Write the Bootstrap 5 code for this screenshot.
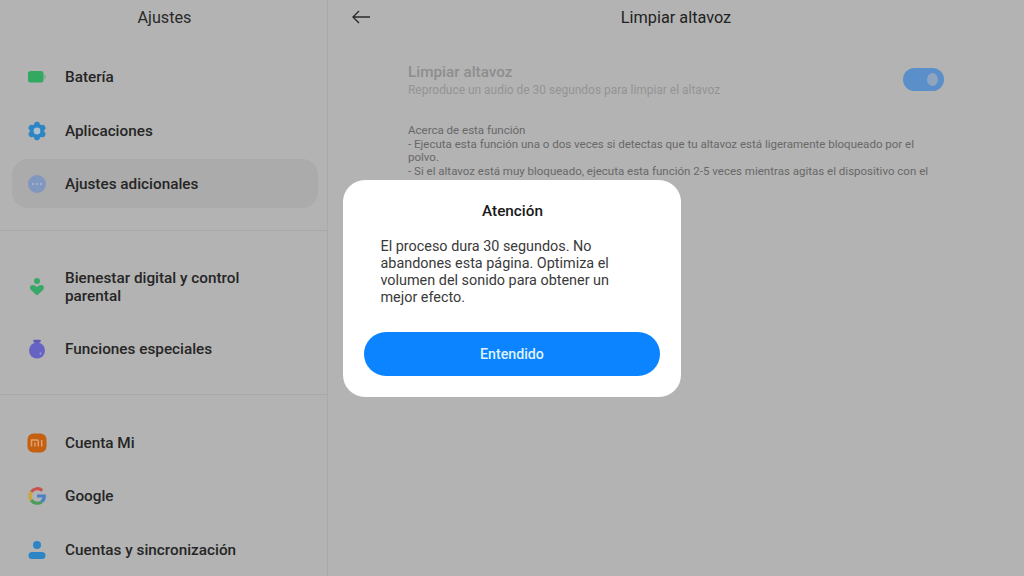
<!DOCTYPE html>
<html lang="es">
<head>
<meta charset="UTF-8">
<title>Limpiar altavoz</title>
<link href="https://cdn.jsdelivr.net/npm/bootstrap@5.3.3/dist/css/bootstrap.min.css" rel="stylesheet">
<style>
 html,body{height:100%}
 body{background:#b3b3b3;font-family:Roboto,"Noto Sans",sans-serif;color:#262626;overflow:hidden}
 .side{width:328px;height:576px;border-right:1px solid #a9a9a9;overflow:hidden}
 .side-title{height:35px;padding:8px 0 0 2px;font-size:16.2px;line-height:20px;color:#2a2a2a}
 .side-group{padding:15.25px 0 19.25px}
 .side-group+.side-group{padding:20.75px 0 18px;border-top:1px solid #a8a8a8}
 .side-group+.side-group+.side-group{padding-top:21px}
 .side-row{min-height:53.5px;padding-left:27px;gap:18px;font-size:15.3px;font-weight:500;line-height:18px;position:relative}
 .side-row.two-line{min-height:70.5px;padding-right:60px}
 .side-row.picked::before{content:"";position:absolute;left:12px;right:9px;top:1.25px;bottom:3.25px;border-radius:16px;background:#ababab}
 .side-row>*{position:relative}
 .side-row svg{width:20px;height:20px;flex:none}
 .main-head{height:35px;padding-top:8px;font-size:16.3px;line-height:20px;position:relative;color:#222}
 .back{position:absolute;left:23px;top:7px;width:20px;height:20px}
 .main-body{padding:27px 80px 0}
 .opt-title{font-size:15.3px;font-weight:500;line-height:20px;color:#8e8e8e}
 .opt-sub{font-size:11.95px;line-height:16px;color:#939393}
 .switch-pill{width:41px;height:23px;border-radius:12px;background:#5b8fc9;margin-top:6px;padding:5px 6px 5px 24px}
 .switch-pill span{display:block;width:11px;height:13px;border-radius:50%;background:#8ea4bf}
 .about{margin:26px 12px 0 0;font-size:11.53px;line-height:13.7px;color:#686868}
 .dialog{position:absolute;left:343px;top:180px;width:338px;height:217px;border-radius:22px;background:#fff;padding:21px}
 .dialog-title{font-size:15.3px;font-weight:500;line-height:20px;color:#1a1a1a;padding-left:1px}
 .dialog-text{margin:17px 30px 0 16.5px;font-size:14.4px;line-height:17px;color:#3a3a3a;height:68px}
 .dialog-btn{margin-top:26px;height:44px;border-radius:22px;background:#0d84ff;border:0;padding:8px 0 6px;color:#dff3ff;font-size:14.2px;font-weight:500}
</style>
</head>
<body>
<div class="d-flex">

  <!-- settings list -->
  <div class="side flex-shrink-0">
    <div class="side-title text-center">Ajustes</div>
    <div class="side-group">
      <div class="side-row d-flex align-items-center">
        <svg viewBox="0 0 20 20"><rect x="1" y="4" width="15.500" height="11.500" rx="2.500" fill="#33a860"/><rect x="17" y="7.500" width="1.700" height="4.500" rx=".8" fill="#7fae91"/></svg>
        <span>Batería</span>
      </div>
      <div class="side-row d-flex align-items-center">
        <svg viewBox="0 0 20 20">
          <g fill="#2c85c4">
            <circle cx="10" cy="10" r="7.300"/>
            <rect x="7.300" y="0.800" width="5.400" height="18.400" rx="2"/>
            <rect x="7.300" y="0.800" width="5.400" height="18.400" rx="2" transform="rotate(60 10 10)"/>
            <rect x="7.300" y="0.800" width="5.400" height="18.400" rx="2" transform="rotate(120 10 10)"/>
          </g>
          <circle cx="10" cy="10" r="3.400" fill="#aebfcc"/>
        </svg>
        <span>Aplicaciones</span>
      </div>
      <div class="side-row picked d-flex align-items-center">
        <svg viewBox="0 0 20 20"><circle cx="10" cy="10" r="9" fill="#8098c0"/><circle cx="6" cy="10" r="1" fill="#aebbd2"/><circle cx="10" cy="10" r="1" fill="#aebbd2"/><circle cx="14" cy="10" r="1" fill="#aebbd2"/></svg>
        <span>Ajustes adicionales</span>
      </div>
    </div>
    <div class="side-group">
      <div class="side-row two-line d-flex align-items-center">
        <svg viewBox="0 0 20 20"><circle cx="10" cy="4" r="3" fill="#37a868"/><path fill="#37a868" d="M10 18.500 4 13c-1.900-1.800-.9-5 1.700-5 1.700 0 2.900.9 4.300 1.900C11.400 8.900 12.600 8 14.300 8c2.600 0 3.600 3.200 1.700 5z"/></svg>
        <span>Bienestar digital y control parental</span>
      </div>
      <div class="side-row d-flex align-items-center">
        <svg viewBox="0 0 20 20"><rect x="6.300" y="0.700" width="7.400" height="2.600" rx=".8" fill="#5f5cb8"/><rect x="7.700" y="3" width="4.600" height="3" fill="#5f5cb8"/><circle cx="10" cy="11.500" r="8" fill="#6663c4"/><circle cx="13.500" cy="14.500" r=".9" fill="#a5a4dc"/></svg>
        <span>Funciones especiales</span>
      </div>
    </div>
    <div class="side-group">
      <div class="side-row d-flex align-items-center">
        <svg viewBox="0 0 20 20"><rect x="0.500" y="0.500" width="19" height="19" rx="6" fill="#c4600f"/><path fill="none" stroke="#e0a272" stroke-width="1.500" d="M4.500 13.500V7h5.500c.9 0 1.300.5 1.300 1.300v5.200M7.900 9.500v4M14.700 7v6.500"/></svg>
        <span>Cuenta Mi</span>
      </div>
      <div class="side-row d-flex align-items-center">
        <svg viewBox="0 0 20 20" fill="none" stroke-width="3.200"><path stroke="#c9524a" d="M15.200 4.600A7.300 7.300 0 0 0 4.300 5.800"/><path stroke="#c9a53c" d="M4.300 5.800a7.300 7.300 0 0 0 0 8.400"/><path stroke="#4c9b5c" d="M4.300 14.200a7.300 7.300 0 0 0 10.400 1.500"/><path stroke="#4a80c8" d="M14.700 15.700A7 7 0 0 0 17.300 10H10"/></svg>
        <span>Google</span>
      </div>
      <div class="side-row d-flex align-items-center">
        <svg viewBox="0 0 20 20"><circle cx="10" cy="5" r="4" fill="#2c85c4"/><rect x="1.500" y="12" width="17" height="7" rx="3.500" fill="#2c85c4"/></svg>
        <span>Cuentas y sincronización</span>
      </div>
    </div>
  </div>

  <!-- speaker cleaner page -->
  <div class="flex-grow-1">
    <div class="main-head text-center">
      <svg class="back" viewBox="0 0 20 20" fill="none" stroke="#2a2a2a" stroke-width="1.400"><path d="M19 10H2M8 4l-6 6 6 6"/></svg>
      Limpiar altavoz
    </div>
    <div class="main-body">
      <div class="d-flex justify-content-between align-items-start">
        <div>
          <div class="opt-title">Limpiar altavoz</div>
          <div class="opt-sub">Reproduce un audio de 30 segundos para limpiar el altavoz</div>
        </div>
        <div class="switch-pill"><span></span></div>
      </div>
      <div class="about">
        Acerca de esta función<br>
        - Ejecuta esta función una o dos veces si detectas que tu altavoz está ligeramente bloqueado por el polvo.<br>
        - Si el altavoz está muy bloqueado, ejecuta esta función 2-5 veces mientras agitas el dispositivo con el
      </div>
    </div>
  </div>
</div>

<!-- dialog -->
<div class="dialog">
  <div class="dialog-title text-center">Atención</div>
  <div class="dialog-text">El proceso dura 30 segundos. No abandones esta página. Optimiza el volumen del sonido para obtener un mejor efecto.</div>
  <button class="dialog-btn btn w-100">Entendido</button>
</div>

<script src="https://cdn.jsdelivr.net/npm/bootstrap@5.3.3/dist/js/bootstrap.bundle.min.js"></script>
</body>
</html>
